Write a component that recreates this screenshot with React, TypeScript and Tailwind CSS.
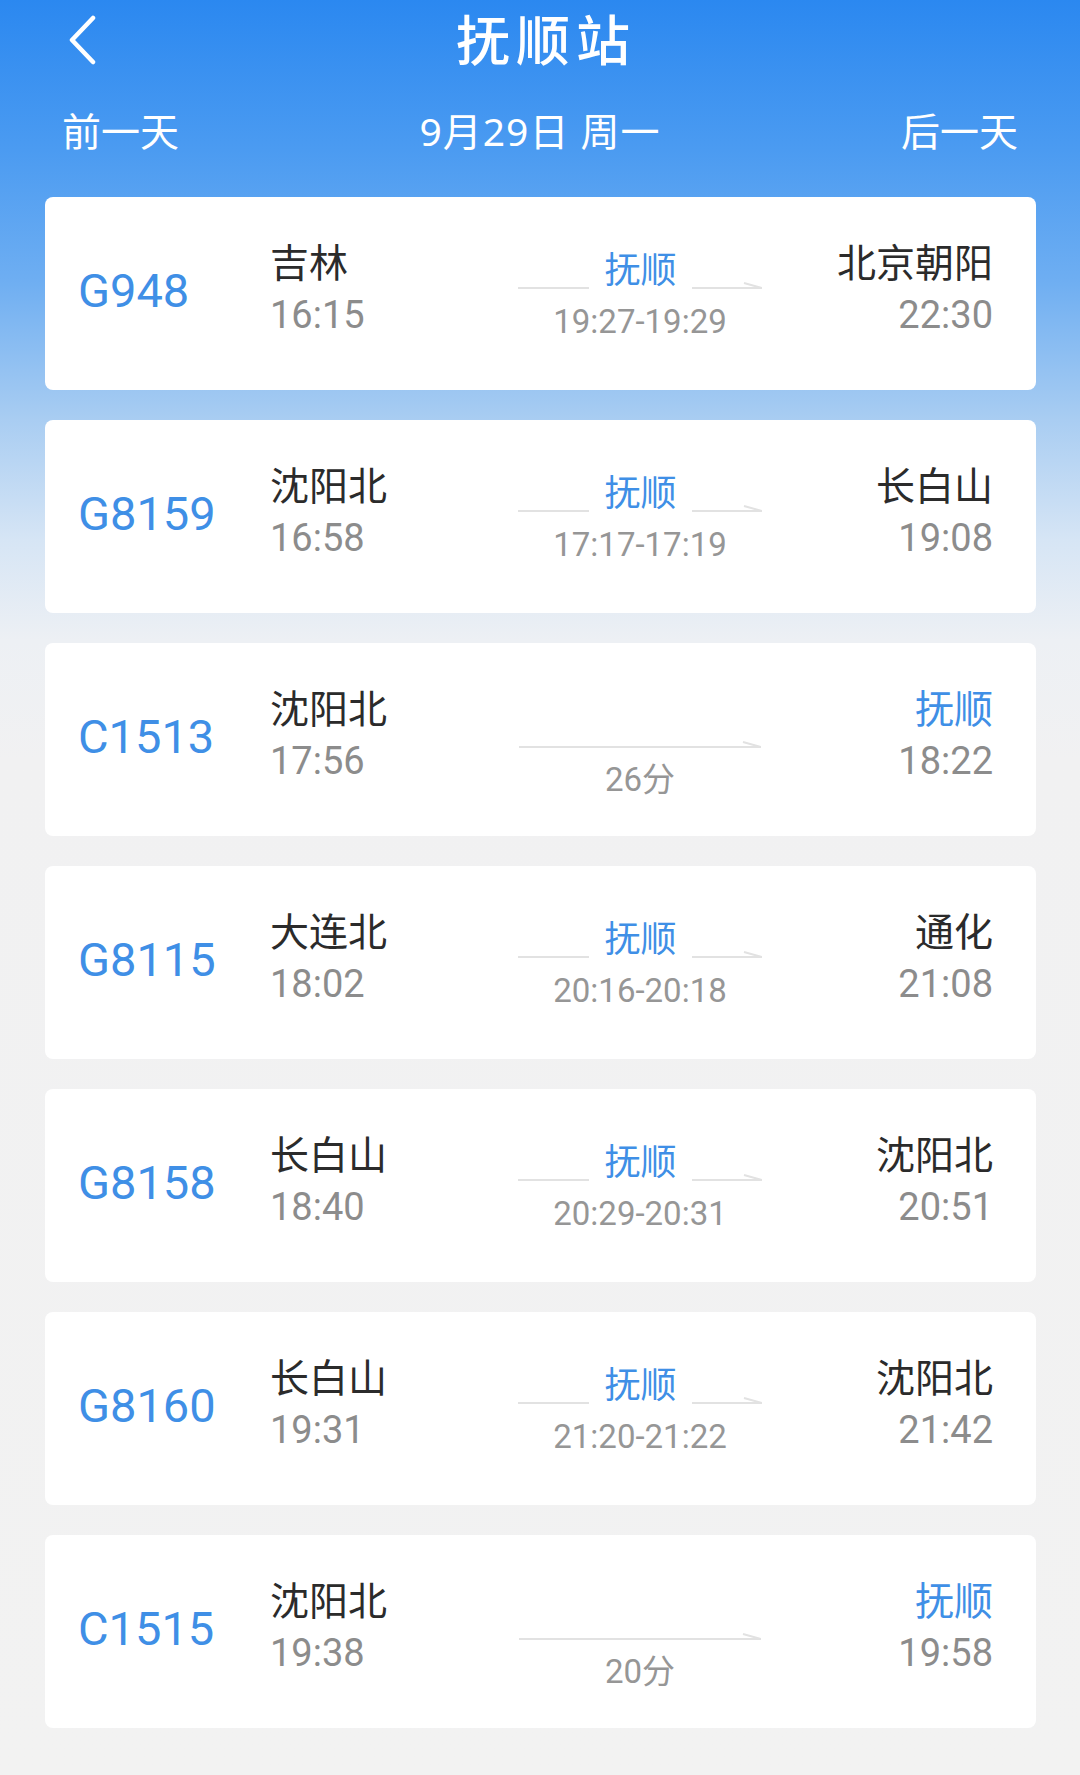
import React from 'react';

type Train = {
  no: string;
  from: string;
  dep: string;
  to: string;
  arr: string;
  // stop time at 抚顺 when it is a pass-through stop, otherwise the trip length
  stop?: string;
  duration?: string;
};

const trains: Train[] = [
  { no: 'G948', from: '吉林', dep: '16:15', to: '北京朝阳', arr: '22:30', stop: '19:27-19:29' },
  { no: 'G8159', from: '沈阳北', dep: '16:58', to: '长白山', arr: '19:08', stop: '17:17-17:19' },
  { no: 'C1513', from: '沈阳北', dep: '17:56', to: '抚顺', arr: '18:22', duration: '26分' },
  { no: 'G8115', from: '大连北', dep: '18:02', to: '通化', arr: '21:08', stop: '20:16-20:18' },
  { no: 'G8158', from: '长白山', dep: '18:40', to: '沈阳北', arr: '20:51', stop: '20:29-20:31' },
  { no: 'G8160', from: '长白山', dep: '19:31', to: '沈阳北', arr: '21:42', stop: '21:20-21:22' },
  { no: 'C1515', from: '沈阳北', dep: '19:38', to: '抚顺', arr: '19:58', duration: '20分' },
];

const CJK = "font-['Noto_Sans','Noto_Sans_CJK_SC',sans-serif]";
const NUM = "font-['Roboto','Noto_Sans_CJK_SC',sans-serif]";

function ArrowLine({ width }: { width: number }) {
  return (
    <svg width={width} height={10} viewBox={`0 0 ${width} 10`} className="block">
      <path d={`M0 9 H${width} L${width - 18} 4`} fill="none" stroke="#e2e2e2" strokeWidth={2} />
    </svg>
  );
}

function TrainCard({ t }: { t: Train }) {
  const toIsHere = t.to === '抚顺';
  return (
    <div className="flex h-[193px] rounded-[8px] bg-white pl-[33px] pr-[43px]">
      {/* train number */}
      <div className={`w-[192px] self-center mb-[6px] text-[47px] leading-none text-[#3f8fe6] ${NUM}`}>
        {t.no}
      </div>

      {/* departure */}
      <div className="flex w-[247px] flex-col pt-[42px]">
        <div className={`text-[39px] leading-[46px] text-[#2b2b2b] ${CJK}`}>{t.from}</div>
        <div className={`mt-[6px] text-[38px] leading-[48px] text-[#8c8c8c] ${NUM}`}>{t.dep}</div>
      </div>

      {/* middle */}
      {t.stop ? (
        <div className="flex w-[246px] flex-col items-center pt-[51px]">
          <div className="flex items-end">
            <div className="mb-[3px] h-[2px] w-[71px] bg-[#e2e2e2]" />
            <div className={`mx-[15px] text-[36px] leading-[44px] text-[#3f8fe6] ${CJK}`}>抚顺</div>
            <div className="mb-[3px]">
              <ArrowLine width={70} />
            </div>
          </div>
          <div className={`mt-[10px] text-[33px] leading-[40px] text-[#969696] ${NUM}`}>{t.stop}</div>
        </div>
      ) : (
        <div className="flex w-[246px] flex-col items-center pt-[95px]">
          <ArrowLine width={242} />
          <div className={`mt-[12px] text-[33px] leading-[40px] text-[#969696] ${NUM}`}>{t.duration}</div>
        </div>
      )}

      {/* arrival */}
      <div className="flex flex-1 flex-col items-end pt-[42px]">
        <div className={`text-[39px] leading-[46px] ${toIsHere ? 'text-[#3f8fe6]' : 'text-[#2b2b2b]'} ${CJK}`}>
          {t.to}
        </div>
        <div className={`mt-[6px] text-[38px] leading-[48px] text-[#8c8c8c] ${NUM}`}>{t.arr}</div>
      </div>
    </div>
  );
}

export default function App() {
  return (
    <div
      className={`min-h-[1775px] w-[1080px] bg-[linear-gradient(180deg,#2b88f0_0px,#4b9bf1_150px,#6eaef2_280px,#a9cdf2_420px,#d6e5f5_540px,#edf0f4_640px,#f1f1f2_760px,#f2f2f2_100%)] ${CJK}`}
    >
      {/* title bar */}
      <div className="grid h-[80px] grid-cols-[1fr_auto_1fr] items-center">
        <div className="pl-[68px]">
          <svg width="30" height="50" viewBox="0 0 30 50" className="block">
            <path d="M25 3 L4 25 L25 47" fill="none" stroke="#ffffff" strokeWidth={4.5} strokeLinecap="round" strokeLinejoin="round" />
          </svg>
        </div>
        <div className="pl-[12px] text-[54px] font-medium leading-none tracking-[6px] text-white">抚顺站</div>
        <div />
      </div>

      {/* date switcher */}
      <div className="mt-[20px] grid h-[60px] grid-cols-[1fr_auto_1fr] items-center px-[62px] text-white">
        <div className="text-[39px] leading-none">前一天</div>
        <div className="text-[39px] leading-none tracking-[1px]">9月29日 周一</div>
        <div className="text-right text-[39px] leading-none">后一天</div>
      </div>

      {/* train list */}
      <div className="mt-[37px] flex flex-col gap-[30px] pl-[45px] pr-[44px]">
        {trains.map((t) => (
          <TrainCard key={t.no} t={t} />
        ))}
      </div>
    </div>
  );
}
